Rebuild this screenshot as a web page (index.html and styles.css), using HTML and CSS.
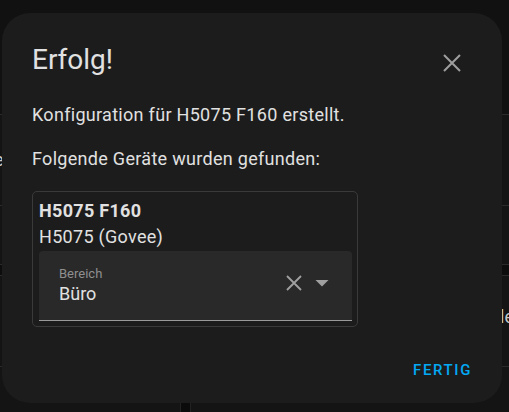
FILE: index.html
```html
<!DOCTYPE html>
<html lang="de">
<head>
    <meta charset="UTF-8">
    <meta name="viewport" content="width=device-width, initial-scale=1.0">
    <title>Erfolg!</title>
    <link rel="stylesheet" href="styles.css">
</head>
<body>
    <div class="backdrop">
        <div class="bg-row bg-top"></div>
        <div class="bg-row bg-second"><span class="bg-left-text">e</span></div>
        <div class="bg-row bg-third"></div>
        <div class="bg-band"></div>
        <div class="bg-row bg-fourth"><span class="bg-right-text">leer</span></div>
        <div class="bg-row bg-last"><div class="bg-stripe"></div></div>
    </div>

    <div class="dialog">
        <div class="dialog-header">
            <h2 class="dialog-title">Erfolg!</h2>
            <span class="close-btn">
                <svg width="18" height="18" viewBox="0 0 18 18">
                    <path d="M1 1L17 17M17 1L1 17" stroke="#9e9e9e" stroke-width="2" fill="none"/>
                </svg>
            </span>
        </div>
        <p class="dialog-text first">Konfiguration für H5075 F160 erstellt.</p>
        <p class="dialog-text second">Folgende Geräte wurden gefunden:</p>

        <div class="device-card">
            <div class="device-name">H5075 F160</div>
            <div class="device-model">H5075 (Govee)</div>
            <div class="area-field">
                <div class="area-texts">
                    <div class="area-label">Bereich</div>
                    <div class="area-value">Büro</div>
                </div>
                <div class="area-icons">
                    <svg width="24" height="24" viewBox="0 0 24 24">
                        <path d="M5 5L19 19M19 5L5 19" stroke="#a0a0a0" stroke-width="1.8" fill="none"/>
                    </svg>
                    <svg width="24" height="24" viewBox="0 0 24 24">
                        <polygon points="5.5,9 18.5,9 12,15.5" fill="#a0a0a0"/>
                    </svg>
                </div>
            </div>
        </div>

        <div class="dialog-actions">
            <span class="action-btn">Fertig</span>
        </div>
    </div>
</body>
</html>
```

FILE: styles.css
```css
body {
    margin: 0;
    font-family: Roboto, "Liberation Sans", sans-serif;
    background-color: #111111;
    color: #e1e1e1;
    overflow: hidden;
}
.backdrop {
    height: 412px;
}
.bg-row {
    background: #141414;
    border-bottom: 1px solid #2a2a2a;
    box-sizing: border-box;
}
.bg-top {
    height: 115px;
    background: #111111;
}
.bg-second {
    height: 91px;
    font-size: 18px;
    line-height: 24px;
    padding-top: 33px;
    color: #c8c8c8;
}
.bg-left-text {
    display: inline-block;
    margin-left: -6px;
}
.bg-third {
    height: 59px;
}
.bg-band {
    height: 10px;
    background: #0d0d0d;
    border-bottom: 1px solid #2a2a2a;
}
.bg-fourth {
    height: 91px;
    font-size: 18px;
    line-height: 24px;
    padding: 29px 0 0 500px;
    color: #c8c8c8;
    white-space: nowrap;
}
.bg-last {
    height: 46px;
    border-bottom: none;
}
.bg-stripe {
    margin-left: 180px;
    width: 9px;
    height: 100%;
    background: #0b0b0b;
    border-left: 1px solid #222;
    border-right: 1px solid #222;
}
.dialog {
    position: absolute;
    left: 2px;
    top: 13px;
    width: 500px;
    height: 390px;
    box-sizing: border-box;
    padding: 29px 30px 0 30px;
    background: #1c1c1c;
    border-radius: 28px;
    display: flex;
    flex-direction: column;
}
.dialog-header {
    display: flex;
    justify-content: space-between;
    align-items: flex-start;
    height: 36px;
}
.dialog-title {
    margin: 0;
    font-size: 28px;
    font-weight: 400;
    line-height: 36px;
    color: #e1e1e1;
}
.close-btn {
    width: 36px;
    height: 36px;
    margin: 3px 2px 0 0;
    display: flex;
    align-items: center;
    justify-content: center;
}
.dialog-text {
    margin: 0;
    font-size: 18px;
    line-height: 24px;
    letter-spacing: 0.3px;
    color: #e1e1e1;
}
.dialog-text.first {
    margin-top: 25px;
}
.dialog-text.second {
    margin-top: 20px;
}
.device-card {
    margin-top: 20px;
    width: 326px;
    box-sizing: border-box;
    border: 1px solid #3a3a3a;
    border-radius: 5px;
    padding: 6px 5px 5px 6px;
}
.device-name {
    font-size: 18px;
    font-weight: 700;
    line-height: 26px;
    letter-spacing: 0.3px;
}
.device-model {
    font-size: 18px;
    line-height: 26px;
    letter-spacing: 0.3px;
}
.area-field {
    margin-top: 1px;
    height: 70px;
    box-sizing: border-box;
    background: #292929;
    border-radius: 4px 4px 0 0;
    border-bottom: 1px solid #9a9a9a;
    padding: 15px 18px 0 20px;
    display: flex;
    justify-content: space-between;
}
.area-label {
    font-size: 13px;
    line-height: 16px;
    color: #8f8f8f;
}
.area-value {
    font-size: 18px;
    line-height: 24px;
    color: #e1e1e1;
}
.area-icons {
    display: flex;
    gap: 4px;
    margin-top: 5px;
    align-self: flex-start;
}
.dialog-actions {
    margin-top: auto;
    padding-bottom: 15px;
    display: flex;
    justify-content: flex-end;
}
.action-btn {
    margin-right: -8px;
    padding: 0 8px;
    font-size: 15px;
    font-weight: 500;
    line-height: 36px;
    letter-spacing: 1.6px;
    text-transform: uppercase;
    color: #03a9f4;
}
```
